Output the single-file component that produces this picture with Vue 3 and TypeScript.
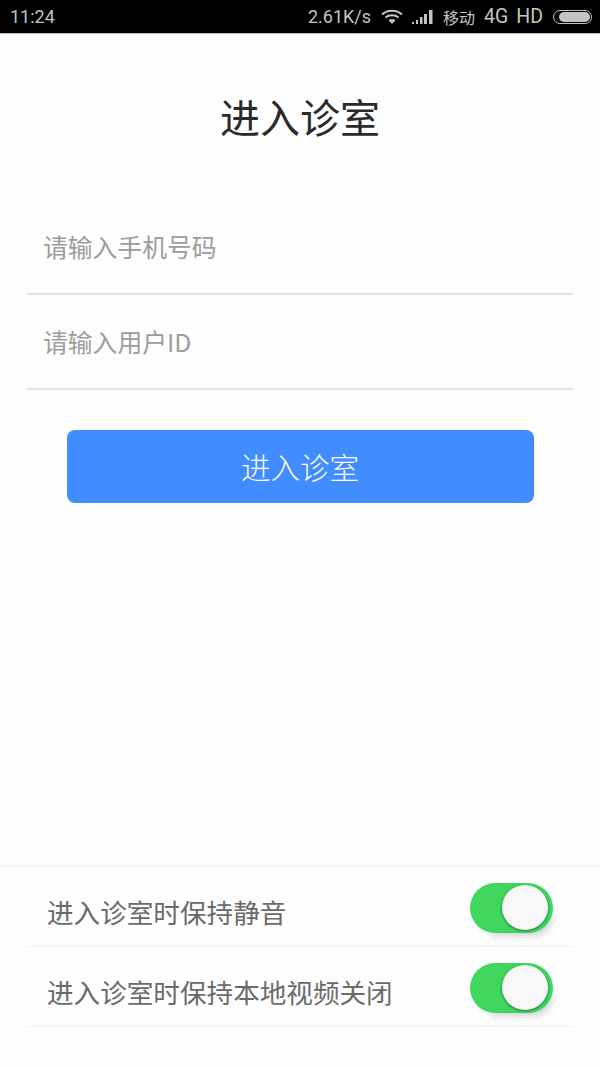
<template>
  <div class="page">
    <div class="status-bar">
      <span class="time">11:24</span>
      <div class="status-right">
        <span class="speed">2.61K/s</span>
        <svg class="wifi" width="22" height="16" viewBox="0 0 22 16">
          <path d="M1 5.5C6.5.5 15.500.5 21 5.500" fill="none" stroke="#c4c4c4" stroke-width="2" />
          <path d="M4.500 8.500C8 5.500 14 5.500 17.500 8.500" fill="none" stroke="#c4c4c4" stroke-width="2" />
          <path d="M7.500 11.300C9.500 9.700 12.500 9.700 14.500 11.300L11 15Z" fill="#c4c4c4" />
        </svg>
        <svg class="signal" width="21" height="14" viewBox="0 0 21 14">
          <rect v-for="bar in signalBars" :key="bar.x" :x="bar.x" :y="14 - bar.h" :width="bar.w" :height="bar.h" fill="#c4c4c4" />
        </svg>
        <span class="carrier">移动</span>
        <span class="net">4G</span>
        <span class="net hd">HD</span>
        <div class="battery"><div class="battery-fill"></div></div>
      </div>
    </div>

    <main class="content">
      <h1 class="title">进入诊室</h1>
      <div class="form">
        <div class="field"><input class="field-input" type="tel" placeholder="请输入手机号码" /></div>
        <div class="field"><input class="field-input" type="text" placeholder="请输入用户ID" /></div>
      </div>
      <button class="enter-btn" type="button">进入诊室</button>
    </main>

    <section class="settings">
      <div v-for="item in settings" :key="item" class="setting-row">
        <span class="setting-label">{{ item }}</span>
        <div class="toggle"><div class="knob"></div></div>
      </div>
    </section>
  </div>
</template>

<script setup lang="ts">
const signalBars = [
  { x: 0, h: 2, w: 2 },
  { x: 4, h: 4, w: 2 },
  { x: 8, h: 7, w: 2.5 },
  { x: 12, h: 10, w: 3 },
  { x: 17, h: 14, w: 3.5 }
]

const settings: string[] = ['进入诊室时保持静音', '进入诊室时保持本地视频关闭']
</script>

<style>
html,
body {
  margin: 0;
  background: #fff;
}
</style>

<style scoped>
.page {
  width: 600px;
  height: 1067px;
  display: flex;
  flex-direction: column;
  background: #fefefe;
  font-family: "Noto Sans CJK SC", "Liberation Sans", sans-serif;
  overflow: hidden;
}

.status-bar {
  height: 33px;
  flex: none;
  display: flex;
  align-items: center;
  justify-content: space-between;
  padding: 0 8px 0 10px;
  background: #000;
  color: #c4c4c4;
  font-family: Roboto, "Noto Sans CJK SC", sans-serif;
  font-size: 18px;
  box-shadow: 0 1px 0 #bbb;
}

.status-right {
  display: flex;
  align-items: center;
}

.speed {
  margin-right: 10px;
}

.wifi {
  margin-right: 9px;
}

.signal {
  margin-right: 10px;
}

.carrier {
  font-family: "Noto Sans CJK SC", sans-serif;
  font-size: 16px;
  margin-right: 9px;
}

.net {
  font-size: 19.500px;
  margin-right: 8px;
}

.hd {
  margin-right: 10px;
}

.battery {
  width: 39px;
  height: 14px;
  padding: 1px;
  box-sizing: border-box;
  border: 1px solid #c4c4c4;
  border-radius: 7px;
}

.battery-fill {
  height: 100%;
  margin-left: 4px;
  background: #c4c4c4;
  border-radius: 5px;
}

.content {
  flex: 1;
  display: flex;
  flex-direction: column;
  align-items: center;
}

.title {
  margin: 53px 0 0;
  height: 60px;
  line-height: 60px;
  font-size: 40px;
  font-weight: 400;
  color: #2b2b2b;
}

.form {
  width: 546px;
  margin-top: 54px;
}

.field {
  height: 95px;
  box-sizing: border-box;
  border-bottom: 2px solid #e4e4e4;
}

.field-input {
  display: block;
  width: 100%;
  height: 93px;
  padding: 0 0 2px 16px;
  box-sizing: border-box;
  border: none;
  outline: none;
  background: transparent;
  font-family: inherit;
  font-size: 24.800px;
  color: #333;
}

.field-input::placeholder {
  color: #9c9c9c;
  opacity: 1;
}

.enter-btn {
  width: 467px;
  height: 73px;
  margin-top: 40px;
  border: none;
  border-radius: 8px;
  background: #418cff;
  color: #fff;
  font-family: inherit;
  font-size: 29.500px;
  font-weight: 300;
  padding: 0 0 1px;
}

.settings {
  flex: none;
  height: 201px;
  box-sizing: border-box;
  padding: 0 27px;
  border-top: 1px solid #f0f0f0;
}

.setting-row {
  height: 80px;
  box-sizing: border-box;
  display: flex;
  align-items: center;
  justify-content: space-between;
  padding: 0 20px;
  border-bottom: 1px solid #f0f0f0;
}

.setting-label {
  margin-top: 10px;
  font-size: 26.600px;
  color: #6a6a6a;
}

.toggle {
  width: 83px;
  height: 50px;
  margin-top: 2px;
  border-radius: 25px;
  background: #40d65f;
  position: relative;
  box-shadow: 5px 9px 9px -7px rgba(0, 0, 0, 0.22);
}

.knob {
  position: absolute;
  top: 2px;
  right: 5px;
  width: 46px;
  height: 45px;
  box-sizing: border-box;
  border-radius: 50%;
  background: #f8f8f8;
  box-shadow: 0 1px 3px rgba(0, 60, 20, 0.6);
}
</style>
